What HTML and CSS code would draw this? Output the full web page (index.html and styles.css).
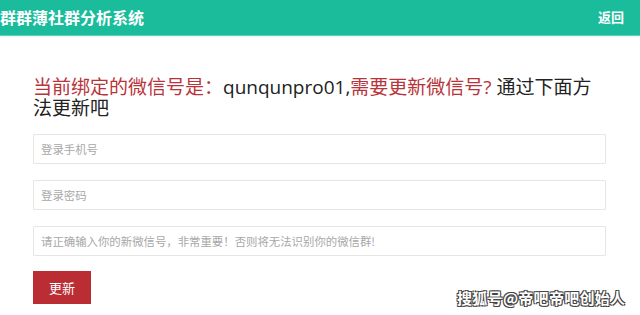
FILE: index.html
```html
<!DOCTYPE html>
<html lang="zh-CN">
<head>
    <meta charset="UTF-8">
    <meta name="viewport" content="width=device-width, initial-scale=1.0">
    <title>群群薄社群分析系统</title>
    <link rel="stylesheet" href="styles.css">
</head>
<body>
    <nav class="navbar">
        <div class="logo">群群薄社群分析系统</div>
        <a class="back-link" href="#">返回</a>
    </nav>

    <div class="content">
        <h1 class="bind-title">
            <span class="red">当前绑定的微信号是：</span>qunqunpro01,<span class="red">需要更新微信号?</span> 通过下面方法更新吧
        </h1>

        <form class="update-form">
            <input type="text" placeholder="登录手机号">
            <input type="password" placeholder="登录密码">
            <input type="text" placeholder="请正确输入你的新微信号，非常重要！否则将无法识别你的微信群!">
            <div>
                <button type="submit" class="update-btn">更新</button>
            </div>
        </form>
    </div>

    <div class="watermark">搜狐号@帝吧帝吧创始人</div>
</body>
</html>
```

FILE: styles.css
```css
/* Basic styling */
body {
    font-family: "Open Sans", "Noto Sans CJK SC", sans-serif;
    background-color: #fff;
    margin: 0;
    padding: 0;
    color: #222;
}

/* Navbar */
.navbar {
    background-color: #1abc9c;
    height: 35px;
    border-bottom: 1px solid #5fcfb6;
    box-shadow: 0 1px 2px rgba(0, 0, 0, 0.06);
    display: flex;
    align-items: center;
    justify-content: space-between;
    padding: 0 16px 0 0;
    color: #fff;
}

.logo {
    font-family: "Noto Sans CJK SC", sans-serif;
    font-size: 16px;
    font-weight: bold;
    margin-top: -2px;
}

.back-link {
    font-family: "Noto Sans CJK SC", sans-serif;
    color: #fff;
    text-decoration: none;
    font-size: 13px;
    font-weight: bold;
    margin-top: -3px;
}

/* Content */
.content {
    width: 573px;
    padding: 0 33px;
}

.bind-title {
    font-size: 19px;
    font-weight: normal;
    line-height: 21px;
    margin: 41px 0 0;
    color: #222;
}

.red {
    color: #b8343a;
}

.update-form {
    display: flex;
    flex-direction: column;
    gap: 16px;
    margin-top: 15px;
}

.update-form input {
    box-sizing: border-box;
    width: 100%;
    height: 30px;
    border: 1px solid #e6e6e6;
    border-radius: 1px;
    padding: 0 7px;
    font-family: "Noto Sans CJK SC", sans-serif;
    font-size: 11.4px;
    outline: none;
}

.update-form input::placeholder {
    color: #a8a8a8;
}

.update-btn {
    width: 58px;
    height: 33px;
    border: none;
    background-color: #b92d33;
    color: #fff;
    font-family: "Noto Sans CJK SC", sans-serif;
    font-size: 13px;
    cursor: pointer;
    margin-top: -1px;
}

/* Watermark over the page corner */
.watermark {
    position: absolute;
    left: 457px;
    top: 287px;
    font-family: "Noto Sans CJK SC", sans-serif;
    font-size: 15px;
    font-weight: bold;
    color: #fff;
    letter-spacing: 0.3px;
    text-shadow: -1px -1px 0 #444, 1px -1px 0 #444, -1px 1px 0 #444, 1px 1px 0 #444;
}
```
